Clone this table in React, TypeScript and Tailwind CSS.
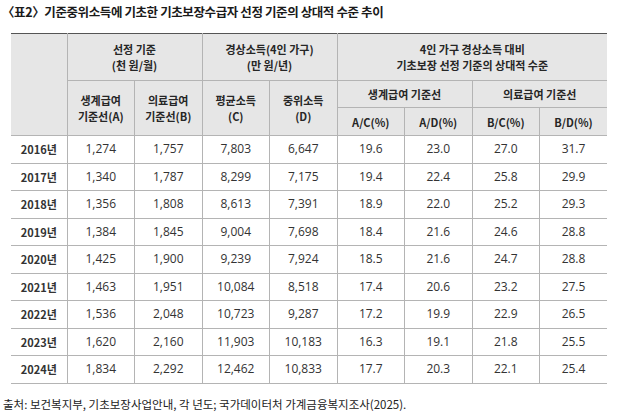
import React from "react";

const rows: string[][] = [
  ["2016년", "1,274", "1,757", "7,803", "6,647", "19.6", "23.0", "27.0", "31.7"],
  ["2017년", "1,340", "1,787", "8,299", "7,175", "19.4", "22.4", "25.8", "29.9"],
  ["2018년", "1,356", "1,808", "8,613", "7,391", "18.9", "22.0", "25.2", "29.3"],
  ["2019년", "1,384", "1,845", "9,004", "7,698", "18.4", "21.6", "24.6", "28.8"],
  ["2020년", "1,425", "1,900", "9,239", "7,924", "18.5", "21.6", "24.7", "28.8"],
  ["2021년", "1,463", "1,951", "10,084", "8,518", "17.4", "20.6", "23.2", "27.5"],
  ["2022년", "1,536", "2,048", "10,723", "9,287", "17.2", "19.9", "22.9", "26.5"],
  ["2023년", "1,620", "2,160", "11,903", "10,183", "16.3", "19.1", "21.8", "25.5"],
  ["2024년", "1,834", "2,292", "12,462", "10,833", "17.7", "20.3", "22.1", "25.4"],
];

const th = "border border-[#b4b4b4] bg-[#e6e6e6] font-bold text-[#262626] text-center align-middle p-0";
const td = "border border-[#b4b4b4] text-center align-middle p-0 text-[#333] h-[27.5px]";

export default function App() {
  return (
    <div
      className="w-[621px] h-[419px] bg-white relative"
      style={{ fontFamily: '"Noto Sans CJK KR", "Noto Sans", sans-serif' }}
    >
      <div className="pt-[3px] pl-[2px] text-[12.5px] font-bold text-[#1a1a1a] leading-[18px] tracking-[-0.4px]">
        〈표2〉기준중위소득에 기초한 기초보장수급자 선정 기준의 상대적 수준 추이
      </div>
      <div className="pl-[11px] pt-[12px]">
        <table className="table-fixed border-collapse w-[596px] text-[11px] leading-[16px] border-t-[1.5px] border-t-[#555] border-b-[1.5px] border-b-[#aaa]">
          <colgroup>
            <col className="w-[56px]" />
            <col className="w-[67.5px]" />
            <col className="w-[67.5px]" />
            <col className="w-[67.5px]" />
            <col className="w-[67.5px]" />
            <col className="w-[67.5px]" />
            <col className="w-[67.5px]" />
            <col className="w-[67.5px]" />
            <col className="w-[67.5px]" />
          </colgroup>
          <thead>
            <tr className="h-[47px]">
              <th rowSpan={3} className={th + " border-l-0 border-t-[#555]"}></th>
              <th colSpan={2} className={th + " border-t-[#555]"}>
                선정 기준
                <br />
                (천 원/월)
              </th>
              <th colSpan={2} className={th + " border-t-[#555]"}>
                경상소득(4인 가구)
                <br />
                (만 원/년)
              </th>
              <th colSpan={4} className={th + " border-r-0 border-t-[#555]"}>
                4인 가구 경상소득 대비
                <br />
                기초보장 선정 기준의 상대적 수준
              </th>
            </tr>
            <tr className="h-[27px]">
              <th rowSpan={2} className={th}>
                생계급여
                <br />
                기준선(A)
              </th>
              <th rowSpan={2} className={th}>
                의료급여
                <br />
                기준선(B)
              </th>
              <th rowSpan={2} className={th}>
                평균소득
                <br />
                (C)
              </th>
              <th rowSpan={2} className={th}>
                중위소득
                <br />
                (D)
              </th>
              <th colSpan={2} className={th}>
                생계급여 기준선
              </th>
              <th colSpan={2} className={th + " border-r-0"}>
                의료급여 기준선
              </th>
            </tr>
            <tr className="h-[28px]">
              <th className={th}>A/C(%)</th>
              <th className={th}>A/D(%)</th>
              <th className={th}>B/C(%)</th>
              <th className={th + " border-r-0"}>B/D(%)</th>
            </tr>
          </thead>
          <tbody>
            {rows.map((r) => (
              <tr key={r[0]}>
                {r.map((c, i) =>
                  i === 0 ? (
                    <td key={i} className={td + " border-l-0 font-bold text-[#222]"}>
                      {c}
                    </td>
                  ) : (
                    <td
                      key={i}
                      className={td + " text-[12px]" + (i === 8 ? " border-r-0" : "")}
                      style={{ fontFamily: '"Open Sans", "Noto Sans", sans-serif' }}
                    >
                      {c}
                    </td>
                  )
                )}
              </tr>
            ))}
          </tbody>
        </table>
      </div>
      <div className="pl-[3px] pt-[12px] text-[11.5px] text-[#222] leading-[17px]">
        출처: 보건복지부, 기초보장사업안내, 각 년도; 국가데이터처 가계금융복지조사(2025).
      </div>
    </div>
  );
}
